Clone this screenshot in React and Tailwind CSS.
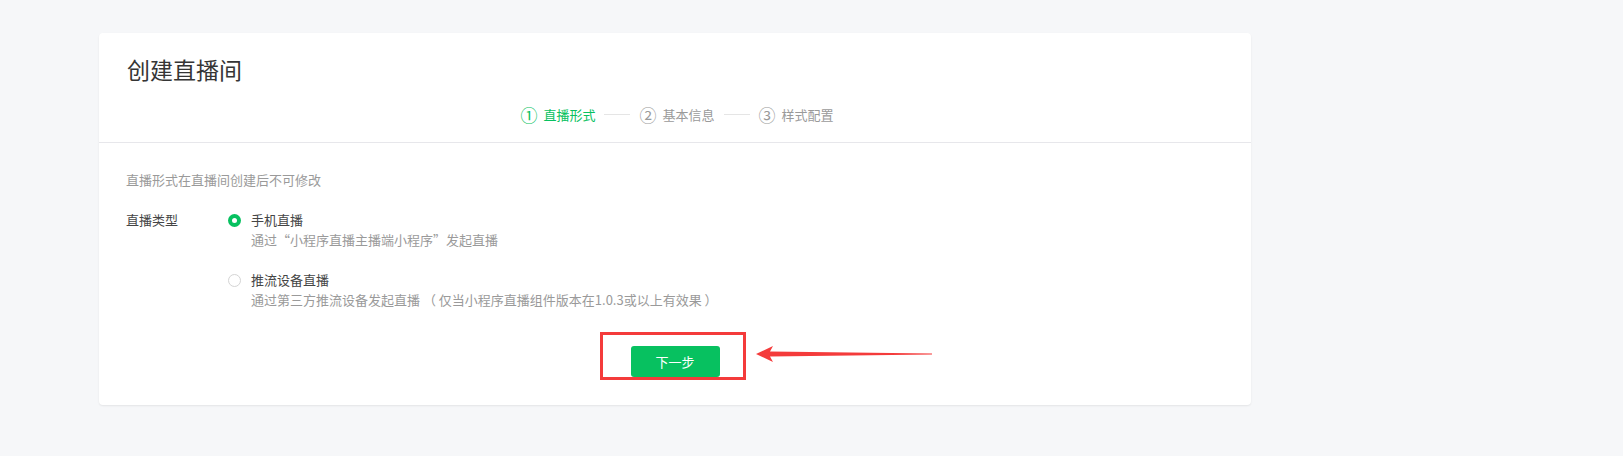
import React from "react";

const FONT = { fontFamily: '"Noto Sans CJK SC", "Noto Sans", sans-serif' };

function Step({ n, label, active }) {
  return (
    <div className={`flex items-center gap-[6px] text-[13px] ${active ? "text-[#07c160]" : "text-[#9a9a9a]"}`}>
      <span className="text-[17px] leading-none">{n}</span>
      <span>{label}</span>
    </div>
  );
}

function Radio({ checked }) {
  return checked ? (
    <span className="block w-[13px] h-[13px] rounded-full bg-[#07c160] flex items-center justify-center shrink-0">
      <span className="block w-[5px] h-[5px] rounded-full bg-white" />
    </span>
  ) : (
    <span className="block w-[13px] h-[13px] rounded-full border border-[#d4d4d4] bg-white shrink-0" />
  );
}

export default function App() {
  return (
    <div style={FONT} className="min-h-[456px] bg-[#f6f7f9] pt-[33px] pl-[99px]">
      <div className="w-[1152px] bg-white rounded-[4px] shadow-[0_1px_2px_rgba(0,0,0,0.08)]">
        <div className="h-[110px] border-b border-[#e7e7eb] px-[28px] pt-[20px]">
          <h1 className="text-[23px] leading-[32px] text-[#353535] font-normal">创建直播间</h1>
          <div className="flex items-center justify-center gap-[9px] mt-[20px] pl-[4px]">
            <Step n="①" label="直播形式" active />
            <span className="w-[26px] h-px bg-[#e5e5e5]" />
            <Step n="②" label="基本信息" />
            <span className="w-[26px] h-px bg-[#e5e5e5]" />
            <Step n="③" label="样式配置" />
          </div>
        </div>
        <div className="px-[27px] pt-[27px] pb-[28px]">
          <p className="text-[13px] leading-[20px] text-[#9a9a9a]">直播形式在直播间创建后不可修改</p>
          <div className="flex mt-[20px]">
            <div className="w-[102px] text-[13px] leading-[20px] text-[#454545]">直播类型</div>
            <div className="flex flex-col gap-[20px]">
              <div className="flex gap-[10px]">
                <div className="pt-[4px]"><Radio checked /></div>
                <div className="text-[13px] leading-[20px]">
                  <div className="text-[#454545]">手机直播</div>
                  <div className="text-[#9a9a9a]">通过“小程序直播主播端小程序”发起直播</div>
                </div>
              </div>
              <div className="flex gap-[10px]">
                <div className="pt-[4px]"><Radio /></div>
                <div className="text-[13px] leading-[20px]">
                  <div className="text-[#454545]">推流设备直播</div>
                  <div className="text-[#9a9a9a] whitespace-pre">{"通过第三方推流设备发起直播 （ 仅当小程序直播组件版本在1.0.3或以上有效果 ）"}</div>
                </div>
              </div>
            </div>
          </div>
          <div className="flex justify-center mt-[36px]">
            <div className="relative">
              <button className="w-[89px] h-[31px] rounded-[3px] bg-[#07c160] text-white text-[13px]">下一步</button>
              <div className="absolute left-[-31px] top-[-14px] w-[146px] h-[48px] border-[3px] border-[#f43b3b]" />
              <svg className="absolute left-[125px] top-[-1px]" width="178" height="18" viewBox="0 0 178 18">
                <polygon points="0,9 17,1 14,6.5 176,8.4 176,9.4 14,11.5 17,17" fill="#f43b3b" />
              </svg>
            </div>
          </div>
        </div>
      </div>
    </div>
  );
}
